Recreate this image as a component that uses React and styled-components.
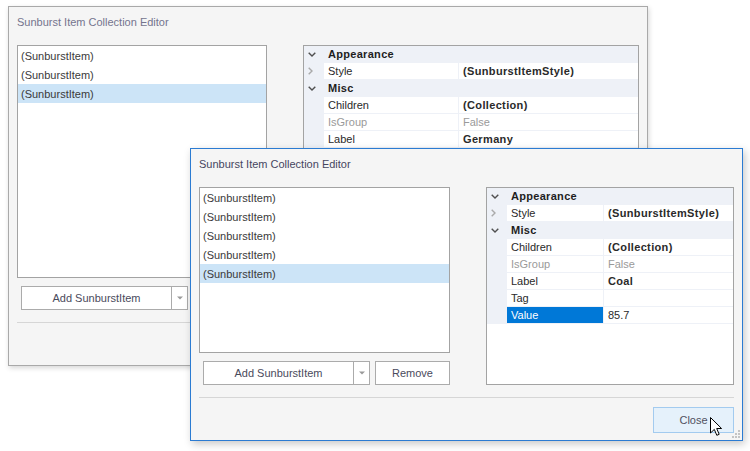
import styled, { createGlobalStyle } from "styled-components";

const GlobalStyle = createGlobalStyle`
  html, body {
    margin: 0;
    padding: 0;
    background: #fff;
  }
  body {
    font-family: "Liberation Sans", Arial, sans-serif;
    font-size: 11px;
    color: #333;
  }
`;

const Desktop = styled.div`
  position: relative;
  width: 750px;
  height: 451px;
  overflow: hidden;
  background: #fff;
`;

// windows sit on a free desktop, so they are placed by coordinates
const Window = styled.div`
  position: absolute;
  left: ${(p) => p.$x}px;
  top: ${(p) => p.$y}px;
  width: ${(p) => p.$w}px;
  height: ${(p) => p.$h}px;
  box-sizing: border-box;
  display: flex;
  flex-direction: column;
  padding: 0 8px 7px 8px;
  background: #f5f5f5;
  border: 1px solid ${(p) => (p.$active ? "#2b7bd2" : "#a9a9a9")};
  box-shadow: ${(p) =>
    p.$active ? "2px 3px 8px rgba(0, 0, 0, 0.22)" : "1px 2px 5px rgba(0, 0, 0, 0.16)"};
`;

const Title = styled.div`
  height: 30px;
  line-height: 31px;
  margin-bottom: 8px;
  color: ${(p) => (p.$active ? "#45455f" : "#74748e")};
  white-space: nowrap;
`;

const Content = styled.div`
  flex: 1;
  display: flex;
  gap: 36px;
  min-height: 0;
`;

const LeftColumn = styled.div`
  width: ${(p) => p.$w}px;
  display: flex;
  flex-direction: column;
`;

const ItemList = styled.div`
  flex: 1;
  background: #fff;
  border: 1px solid #a3a3a3;
  overflow: hidden;
`;

const ListRow = styled.div`
  height: 19px;
  line-height: 20px;
  padding-left: 3px;
  color: #3a3a3a;
  white-space: nowrap;
  background: ${(p) => (p.$selected ? "#cce4f7" : "transparent")};
`;

const ButtonRow = styled.div`
  display: flex;
  gap: 5px;
  height: 24px;
  margin-top: 8px;
  padding-left: 4px;
`;

const Button = styled.div`
  box-sizing: border-box;
  display: flex;
  align-items: center;
  justify-content: center;
  width: ${(p) => p.$w}px;
  height: 100%;
  background: #fff;
  border: 1px solid #ababab;
  color: #4a4a5c;
  white-space: nowrap;
`;

const SplitButton = styled(Button)`
  justify-content: flex-start;
`;

const SplitLabel = styled.div`
  flex: 1;
  text-align: center;
  border-right: 1px solid #ababab;
  height: 100%;
  line-height: 22px;
`;

const SplitArrow = styled.div`
  width: 15px;
  display: flex;
  align-items: center;
  justify-content: center;
`;

const PropertyGrid = styled.div`
  flex: 1;
  background: #fff;
  border: 1px solid #a3a3a3;
  overflow: hidden;
`;

const GridRow = styled.div`
  display: grid;
  grid-template-columns: 20px ${(p) => p.$name}px 1fr;
  height: 17px;
  border-bottom: 1px solid #eef1f7;
  background: #eef1f7;
  box-sizing: border-box;
`;

const Gutter = styled.div`
  display: flex;
  align-items: center;
  padding-left: 4px;
`;

const CategoryLabel = styled.div`
  grid-column: 2 / 4;
  line-height: 17px;
  padding-left: 4px;
  font-weight: bold;
  letter-spacing: 0.3px;
  color: #1e1e1e;
`;

const Cell = styled.div`
  line-height: 17px;
  padding-left: 4px;
  white-space: nowrap;
  overflow: hidden;
  background: ${(p) => (p.$selected ? "#0078d7" : "#fff")};
  color: ${(p) => (p.$selected ? "#fff" : p.$readonly ? "#9a9a9a" : "#2a2a2a")};
  font-weight: ${(p) => (p.$bold ? "bold" : "normal")};
  letter-spacing: ${(p) => (p.$bold ? "0.35px" : "0")};
  border-right: ${(p) => (p.$name ? "1px solid #eef1f7" : "none")};
`;

const Footer = styled.div`
  display: flex;
  justify-content: flex-end;
  height: 26px;
  margin-top: 12px;
  padding-top: 9px;
  border-top: 1px solid #d6d6d6;
`;

const CloseButton = styled.div`
  box-sizing: border-box;
  width: 81px;
  height: 26px;
  line-height: 24px;
  text-align: center;
  background: ${(p) => (p.$hover ? "#e5f1fb" : "#fff")};
  border: 1px solid ${(p) => (p.$hover ? "#a3cbef" : "#ababab")};
  color: #505060;
`;

const Grip = styled.svg`
  position: absolute;
  right: 1px;
  bottom: 1px;
`;

const Cursor = styled.svg`
  position: absolute;
  left: 710px;
  top: 417px;
`;

const ChevronDown = () => (
  <svg width="8" height="5" viewBox="0 0 8 5">
    <polyline points="0.7,0.7 4,4 7.3,0.7" fill="none" stroke="#4f4f4f" strokeWidth="1.4" />
  </svg>
);

const ChevronRight = () => (
  <svg width="5" height="8" viewBox="0 0 5 8">
    <polyline points="0.7,0.7 4,4 0.7,7.3" fill="none" stroke="#aaaaaa" strokeWidth="1.4" />
  </svg>
);

const DropArrow = () => (
  <svg width="6" height="4" viewBox="0 0 6 4">
    <polygon points="0,0.5 6,0.5 3,3.5" fill="#9a9a9a" />
  </svg>
);

const SizeGrip = () => (
  <Grip width="10" height="10" viewBox="0 0 10 10">
    {[
      [7, 1],
      [4, 4],
      [7, 4],
      [1, 7],
      [4, 7],
      [7, 7],
    ].map(([x, y]) => (
      <rect key={`${x}-${y}`} x={x} y={y} width="2" height="2" fill="#c4c4c4" />
    ))}
  </Grip>
);

const properties = (label, extra) => [
  { category: "Appearance" },
  { name: "Style", value: "(SunburstItemStyle)", bold: true, expandable: true },
  { category: "Misc" },
  { name: "Children", value: "(Collection)", bold: true },
  { name: "IsGroup", value: "False", readonly: true },
  { name: "Label", value: label, bold: true },
  ...extra,
];

const Editor = ({ x, y, w, h, active, items, selected, listWidth, nameWidth, rows }) => (
  <Window $x={x} $y={y} $w={w} $h={h} $active={active}>
    <Title $active={active}>Sunburst Item Collection Editor</Title>
    <Content>
      <LeftColumn $w={listWidth}>
        <ItemList>
          {Array.from({ length: items }, (_, i) => (
            <ListRow key={i} $selected={i === selected}>
              (SunburstItem)
            </ListRow>
          ))}
        </ItemList>
        <ButtonRow>
          <SplitButton $w={167}>
            <SplitLabel>Add SunburstItem</SplitLabel>
            <SplitArrow>
              <DropArrow />
            </SplitArrow>
          </SplitButton>
          {active && <Button $w={75}>Remove</Button>}
        </ButtonRow>
      </LeftColumn>
      <PropertyGrid>
        {rows.map((r, i) =>
          r.category ? (
            <GridRow key={i} $name={nameWidth}>
              <Gutter>
                <ChevronDown />
              </Gutter>
              <CategoryLabel>{r.category}</CategoryLabel>
            </GridRow>
          ) : (
            <GridRow key={i} $name={nameWidth}>
              <Gutter>{r.expandable && <ChevronRight />}</Gutter>
              <Cell $name $readonly={r.readonly} $selected={r.selected}>
                {r.name}
              </Cell>
              <Cell $bold={r.bold} $readonly={r.readonly}>
                {r.value}
              </Cell>
            </GridRow>
          )
        )}
      </PropertyGrid>
    </Content>
    <Footer>{active && <CloseButton $hover>Close</CloseButton>}</Footer>
    {active && <SizeGrip />}
  </Window>
);

export default function App() {
  return (
    <Desktop>
      <GlobalStyle />
      {/* the inactive editor behind; its lower part is covered by the front one */}
      <Editor
        x={8}
        y={6}
        w={640}
        h={360}
        items={3}
        selected={2}
        listWidth={250}
        nameWidth={135}
        rows={properties("Germany", [])}
      />
      <Editor
        x={190}
        y={148}
        w={553}
        h={293}
        active
        items={5}
        selected={4}
        listWidth={251}
        nameWidth={97}
        rows={properties("Coal", [
          { name: "Tag", value: "" },
          { name: "Value", value: "85.7", selected: true },
        ])}
      />
      <Cursor width="13" height="20" viewBox="0 0 13 20">
        <path
          d="M0.5 0.5 L0.5 16 L4.3 12.4 L6.8 18.3 L9.2 17.3 L6.7 11.5 L11.6 11.5 Z"
          fill="#fff"
          stroke="#000"
          strokeWidth="1"
          strokeLinejoin="miter"
        />
      </Cursor>
    </Desktop>
  );
}
